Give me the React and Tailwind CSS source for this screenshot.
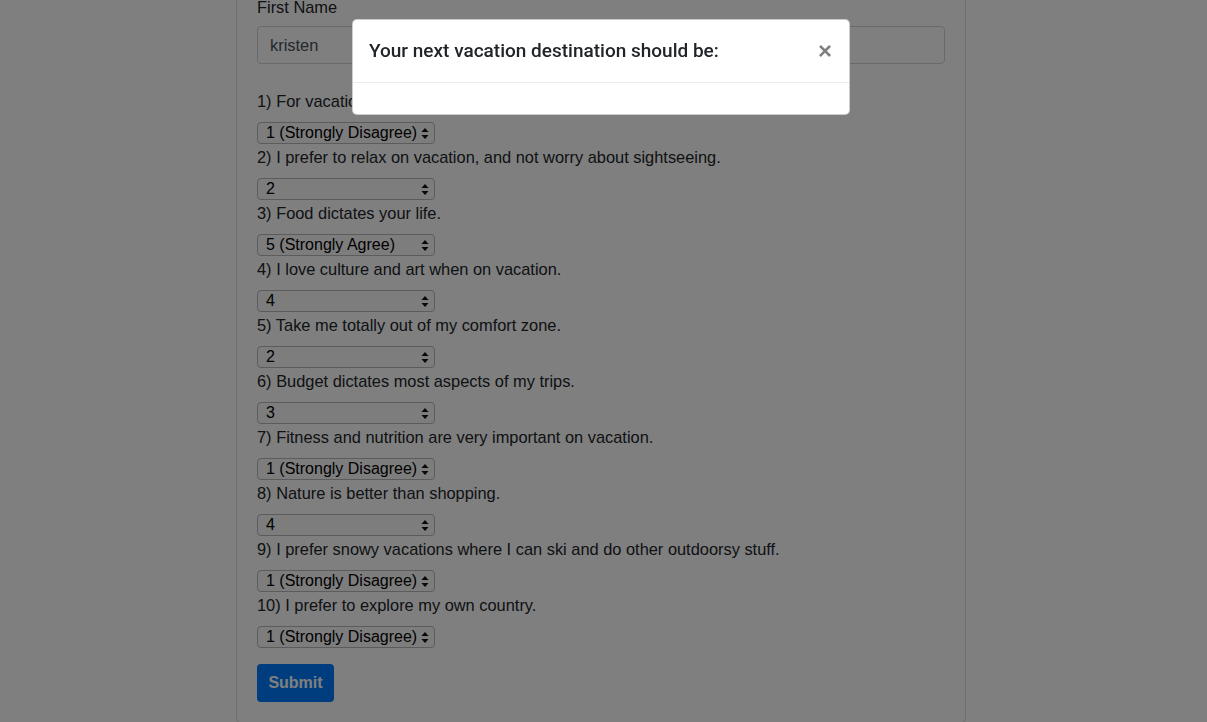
const questions = [
  { q: "1) For vacations, I like to have every day planned in advance.", a: "1 (Strongly Disagree)" },
  { q: "2) I prefer to relax on vacation, and not worry about sightseeing.", a: "2" },
  { q: "3) Food dictates your life.", a: "5 (Strongly Agree)" },
  { q: "4) I love culture and art when on vacation.", a: "4" },
  { q: "5) Take me totally out of my comfort zone.", a: "2" },
  { q: "6) Budget dictates most aspects of my trips.", a: "3" },
  { q: "7) Fitness and nutrition are very important on vacation.", a: "1 (Strongly Disagree)" },
  { q: "8) Nature is better than shopping.", a: "4" },
  { q: "9) I prefer snowy vacations where I can ski and do other outdoorsy stuff.", a: "1 (Strongly Disagree)" },
  { q: "10) I prefer to explore my own country.", a: "1 (Strongly Disagree)" },
];

function FakeSelect({ value }) {
  return (
    <div className="flex h-[22px] w-[178px] items-center justify-between rounded-[4px] border border-[#b9b9b9] bg-[#fafafa] pl-[8px] pr-[5px] text-[16px] leading-none text-black">
      <span>{value}</span>
      <svg width="8" height="13" viewBox="0 0 8 13" className="shrink-0">
        <path d="M4 1 L7.5 5 L0.5 5 Z" fill="#111" />
        <path d="M4 12 L7.5 8 L0.5 8 Z" fill="#111" />
      </svg>
    </div>
  );
}

export default function App() {
  return (
    <div className="relative h-[722px] overflow-hidden bg-white font-['Liberation_Sans',Arial,sans-serif] text-[16.4px] text-[#212529]">
      <div className="-mt-[20px] ml-[236px] w-[730px] rounded-[4px] border border-[#dcdcdc] px-[20px] pb-[20px] pt-[14px]">
        <label className="mb-[7px] block leading-[24px]">First Name</label>
        <div className="flex h-[38px] items-center rounded-[4px] border border-[#ced4da] px-[12px] text-[#495057]">
          kristen
        </div>
        <div className="mt-[25px]">
          {questions.map((item) => (
            <div key={item.q}>
              <p className="mb-[9px] mt-[1px] leading-[24px]">{item.q}</p>
              <FakeSelect value={item.a} />
            </div>
          ))}
        </div>
        <button className="mt-[16px] h-[38px] w-[77px] rounded-[4px] bg-[#007bff] text-[16px] font-bold text-white">
          Submit
        </button>
      </div>

      <div className="fixed inset-0 bg-black/50">
        <div className="ml-[352px] mt-[19px] w-[498px] rounded-[5px] border border-black/20 bg-white">
          <div className="flex items-center justify-between border-b border-[#e9ecef] p-4">
            <h5 className="font-['Roboto',Arial,sans-serif] text-[19px] font-medium leading-[30px] text-[#212529]">
              Your next vacation destination should be:
            </h5>
            <button className="mr-[1px] text-[24px] font-bold leading-none text-black opacity-50">
              ×
            </button>
          </div>
          <div className="h-[31px]" />
        </div>
      </div>
    </div>
  );
}
